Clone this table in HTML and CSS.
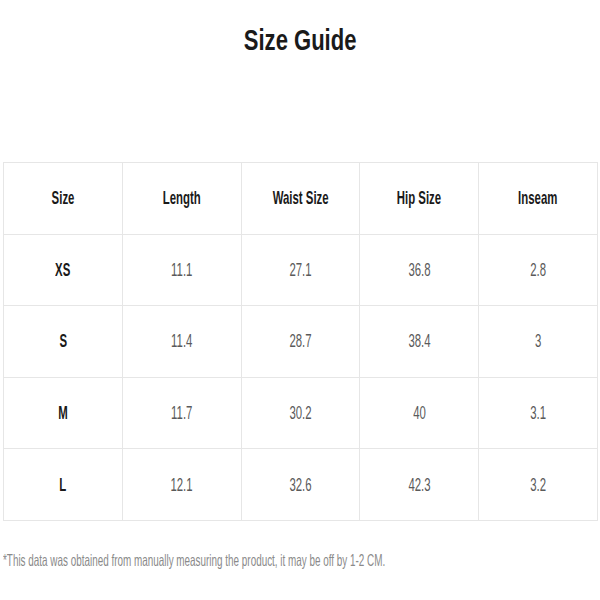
FILE: index.html
```html
<!DOCTYPE html>
<html>
<head>
<meta charset="utf-8">
<link rel="stylesheet" href="styles.css">
</head>
<body>
<div class="page">
  <h1 class="title"><span class="sq">Size Guide</span></h1>
  <table class="guide">
    <thead>
      <tr><th><span class="sq">Size</span></th><th><span class="sq">Length</span></th><th><span class="sq">Waist Size</span></th><th><span class="sq">Hip Size</span></th><th><span class="sq">Inseam</span></th></tr>
    </thead>
    <tbody>
      <tr><th><span class="sq">XS</span></th><td><span class="sq">11.1</span></td><td><span class="sq">27.1</span></td><td><span class="sq">36.8</span></td><td><span class="sq">2.8</span></td></tr>
      <tr><th><span class="sq">S</span></th><td><span class="sq">11.4</span></td><td><span class="sq">28.7</span></td><td><span class="sq">38.4</span></td><td><span class="sq">3</span></td></tr>
      <tr><th><span class="sq">M</span></th><td><span class="sq">11.7</span></td><td><span class="sq">30.2</span></td><td><span class="sq">40</span></td><td><span class="sq">3.1</span></td></tr>
      <tr><th><span class="sq">L</span></th><td><span class="sq">12.1</span></td><td><span class="sq">32.6</span></td><td><span class="sq">42.3</span></td><td><span class="sq">3.2</span></td></tr>
    </tbody>
  </table>
  <p class="note"><span class="sq-left">*This data was obtained from manually measuring the product, it may be off by 1-2 CM.</span></p>
</div>
</body>
</html>
```
FILE: styles.css
```css
html, body {
  margin: 0;
  padding: 0;
  background: #ffffff;
}
body {
  font-family: "Liberation Sans", Arial, sans-serif;
  width: 600px;
  height: 600px;
  overflow: hidden;
}
.page {
  display: flex;
  flex-direction: column;
  padding: 0 2px 0 3px;
}
.sq {
  display: inline-block;
  transform: scaleX(0.6);
  transform-origin: center;
  white-space: nowrap;
}
.sq-left {
  display: inline-block;
  transform: scaleX(0.6);
  transform-origin: left center;
  white-space: nowrap;
}
.title {
  margin: 0;
  padding-top: 23px;
  height: 162px;
  box-sizing: border-box;
  text-align: center;
  font-size: 29px;
  line-height: 34px;
  font-weight: 700;
  color: #1a1a1a;
}
.title .sq {
  transform: scaleX(0.76);
}
.guide {
  width: 595px;
  border-collapse: collapse;
  table-layout: fixed;
  border: 1px solid #dcdcdc;
}
.guide tr {
  height: 71.6px;
}
.guide th, .guide td {
  border: 1px solid #e6e6e6;
  text-align: center;
  vertical-align: middle;
  padding: 0;
  font-size: 19px;
}
.guide th {
  font-weight: 700;
  color: #1a1a1a;
}
.guide td {
  font-weight: 400;
  color: #5a5a5a;
}
.note {
  margin: 0;
  padding-top: 29px;
  width: 595px;
  overflow: hidden;
  font-size: 16.5px;
  line-height: 20px;
  color: #8a8a8a;
}
```
